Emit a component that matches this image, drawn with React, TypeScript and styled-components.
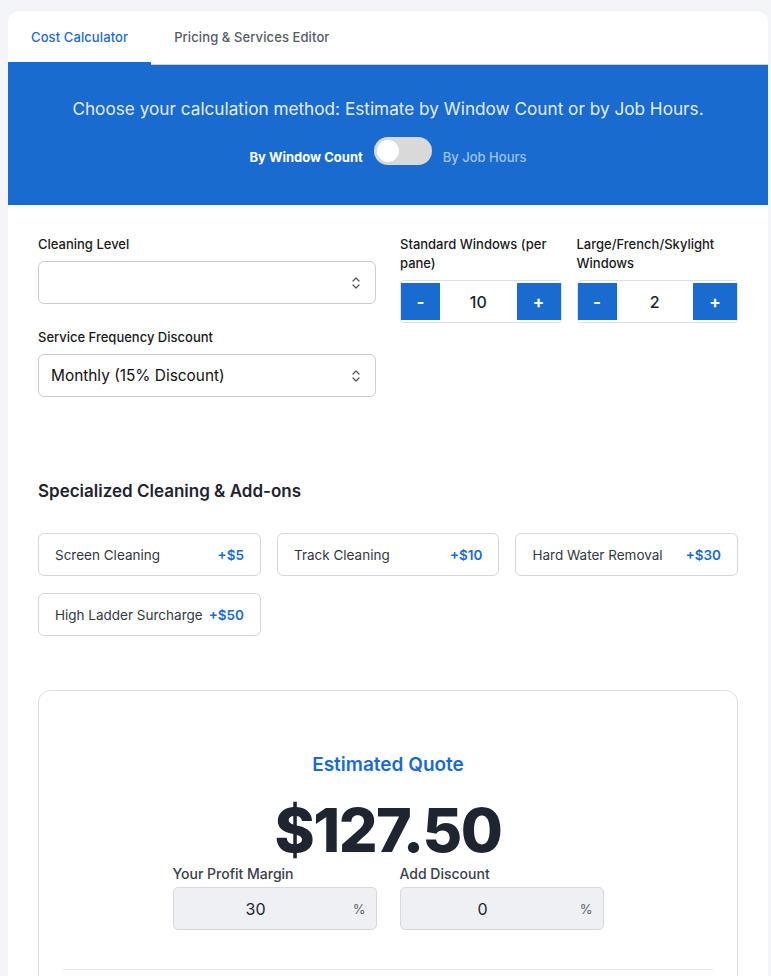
import React from 'react'
import styled, { createGlobalStyle } from 'styled-components'

const BLUE = '#1a6bcf'

const GlobalStyle = createGlobalStyle`
  * { box-sizing: border-box; }
  body {
    margin: 0;
    padding: 11px 0 0 8px;
    background: #f4f5f9;
    font-family: Inter, "Noto Sans", "Liberation Sans", sans-serif;
    color: #1f2430;
  }
`

const Card = styled.div`
  width: 760px;
  background: #ffffff;
  border-radius: 12px 12px 0 0;
  overflow: hidden;
`

const TabBar = styled.div`
  display: flex;
  border-bottom: 1px solid #c9d5e8;
`

const Tab = styled.div<{ active?: boolean }>`
  height: 54px;
  margin-bottom: -1px;
  padding: 0 23px;
  display: flex;
  align-items: center;
  font-size: 13px;
  font-weight: 500;
  letter-spacing: 0.1px;
  color: ${({ active }) => (active ? BLUE : '#555b66')};
  border-bottom: 3px solid ${({ active }) => (active ? BLUE : 'transparent')};
`

const Banner = styled.div`
  background: ${BLUE};
  padding: 32px 20px 40px;
  display: flex;
  flex-direction: column;
  align-items: center;
  gap: 16px;
`

const BannerText = styled.div`
  font-size: 17.2px;
  line-height: 24px;
  color: rgba(255, 255, 255, 0.9);
`

const ToggleRow = styled.div`
  display: flex;
  align-items: center;
  gap: 11px;
  font-size: 13px;
`

const ToggleLabel = styled.span<{ active?: boolean }>`
  padding-top: 11px;
  color: ${({ active }) => (active ? '#ffffff' : '#a3c0ea')};
  font-weight: ${({ active }) => (active ? 700 : 500)};
`

const Switch = styled.div`
  width: 58px;
  height: 28px;
  border-radius: 14px;
  background: #d9d9d9;
  padding: 3px;
  display: flex;
  align-items: center;
`

const Knob = styled.div`
  width: 22px;
  height: 22px;
  border-radius: 50%;
  background: #ffffff;
`

const Content = styled.div`
  padding: 30px 30px 0;
`

const FormGrid = styled.div`
  display: grid;
  grid-template-columns: 1fr 1fr;
  column-gap: 24px;
  align-items: start;
`

const FieldStack = styled.div`
  display: flex;
  flex-direction: column;
  gap: 24px;
`

const CounterGrid = styled.div`
  display: grid;
  grid-template-columns: 1fr 1fr;
  column-gap: 15px;
`

const Field = styled.div`
  display: flex;
  flex-direction: column;
`

const Label = styled.label`
  font-size: 13px;
  line-height: 19px;
  font-weight: 500;
  color: #1a1a1a;
  margin-bottom: 7px;
`

const Select = styled.div`
  height: 43px;
  border: 1px solid #c9ccd2;
  border-radius: 6px;
  padding: 0 14px 0 12px;
  display: flex;
  align-items: center;
  justify-content: space-between;
  font-size: 15.4px;
  color: #111;
`

const Stepper = styled.div`
  height: 43px;
  border: 1px solid #dcdfe5;
  border-radius: 4px;
  padding: 2px 0;
  display: flex;
  align-items: stretch;
`

const StepButton = styled.button<{ wide?: boolean }>`
  all: unset;
  width: ${({ wide }) => (wide ? '44px' : '39px')};
  background: ${BLUE};
  color: #fff;
  font-size: 17px;
  font-weight: 700;
  display: flex;
  align-items: center;
  justify-content: center;
  font-family: Inter, sans-serif;
`

const StepValue = styled.div`
  flex: 1;
  display: flex;
  align-items: center;
  justify-content: center;
  font-size: 16px;
  font-weight: 500;
  color: #1f2430;
`

const SectionTitle = styled.h2`
  margin: 82px 0 30px;
  font-size: 17px;
  line-height: 24px;
  font-weight: 600;
  color: #1f2430;
`

const AddonGrid = styled.div`
  display: grid;
  grid-template-columns: repeat(3, 1fr);
  column-gap: 16px;
  row-gap: 17px;
`

const Addon = styled.div`
  height: 43px;
  border: 1px solid #d3d6dc;
  border-radius: 6px;
  padding: 0 16px;
  display: flex;
  align-items: center;
  justify-content: space-between;
  gap: 6px;
  font-size: 13.5px;
  white-space: nowrap;
  color: #333842;
`

const Price = styled.span`
  color: ${BLUE};
  font-weight: 600;
  font-size: 13.5px;
`

const QuoteCard = styled.div`
  margin-top: 54px;
  border: 1px solid #dcdfe4;
  border-radius: 12px;
  padding: 60px 24px 0;
  display: flex;
  flex-direction: column;
  align-items: center;
  height: 320px;
`

const QuoteTitle = styled.div`
  font-size: 19px;
  line-height: 28px;
  font-weight: 600;
  color: ${BLUE};
`

const QuoteAmount = styled.div`
  margin-top: 19px;
  font-size: 61px;
  line-height: 64px;
  font-weight: 800;
  letter-spacing: -1.5px;
  color: #1e2530;
`

const AdjustRow = styled.div`
  margin-top: 2px;
  display: flex;
  gap: 23px;
`

const AdjustField = styled.div`
  width: 204px;
  display: flex;
  flex-direction: column;
`

const AdjustLabel = styled.div`
  font-size: 14px;
  line-height: 20px;
  font-weight: 500;
  color: #3a404b;
  margin-bottom: 3px;
`

const AdjustInput = styled.div`
  position: relative;
  height: 43px;
  background: #eff0f4;
  border: 1px solid #d6d9df;
  border-radius: 5px;
  padding: 0 50px 0 12px;
  display: flex;
  align-items: center;
  justify-content: center;
  font-size: 16px;
  color: #1f2430;
`

const Suffix = styled.span`
  position: absolute;
  right: 10px;
  font-size: 13px;
  color: #5b616c;
`

const Divider = styled.hr`
  align-self: stretch;
  margin: 39px 0 0;
  border: none;
  border-top: 1px solid #e3e5e9;
`

function UpDown() {
  return (
    <svg width="10" height="14" viewBox="0 0 10 14" fill="none" stroke="#555" strokeWidth="1.3" strokeLinecap="round" strokeLinejoin="round">
      <path d="M2 5 L5 2 L8 5" />
      <path d="M2 9 L5 12 L8 9" />
    </svg>
  )
}

function Counter({ label, value }: { label: string; value: number }) {
  return (
    <Field>
      <Label>{label}</Label>
      <Stepper>
        <StepButton>-</StepButton>
        <StepValue>{value}</StepValue>
        <StepButton wide>+</StepButton>
      </Stepper>
    </Field>
  )
}

const addons = [
  { name: 'Screen Cleaning', price: 5 },
  { name: 'Track Cleaning', price: 10 },
  { name: 'Hard Water Removal', price: 30 },
  { name: 'High Ladder Surcharge', price: 50 },
]

export default function App() {
  return (
    <>
      <GlobalStyle />
      <Card>
        <TabBar>
          <Tab active>Cost Calculator</Tab>
          <Tab>Pricing &amp; Services Editor</Tab>
        </TabBar>

        <Banner>
          <BannerText>Choose your calculation method: Estimate by Window Count or by Job Hours.</BannerText>
          <ToggleRow>
            <ToggleLabel active>By Window Count</ToggleLabel>
            <Switch>
              <Knob />
            </Switch>
            <ToggleLabel>By Job Hours</ToggleLabel>
          </ToggleRow>
        </Banner>

        <Content>
          <FormGrid>
            <FieldStack>
              <Field>
                <Label>Cleaning Level</Label>
                <Select>
                  <span />
                  <UpDown />
                </Select>
              </Field>
              <Field>
                <Label>Service Frequency Discount</Label>
                <Select>
                  <span>Monthly (15% Discount)</span>
                  <UpDown />
                </Select>
              </Field>
            </FieldStack>
            <CounterGrid>
              <Counter label="Standard Windows (per pane)" value={10} />
              <Counter label="Large/French/Skylight Windows" value={2} />
            </CounterGrid>
          </FormGrid>

          <SectionTitle>Specialized Cleaning &amp; Add-ons</SectionTitle>
          <AddonGrid>
            {addons.map((a) => (
              <Addon key={a.name}>
                <span>{a.name}</span>
                <Price>+${a.price}</Price>
              </Addon>
            ))}
          </AddonGrid>

          <QuoteCard>
            <QuoteTitle>Estimated Quote</QuoteTitle>
            <QuoteAmount>$127.50</QuoteAmount>
            <AdjustRow>
              <AdjustField>
                <AdjustLabel>Your Profit Margin</AdjustLabel>
                <AdjustInput>
                  30
                  <Suffix>%</Suffix>
                </AdjustInput>
              </AdjustField>
              <AdjustField>
                <AdjustLabel>Add Discount</AdjustLabel>
                <AdjustInput>
                  0
                  <Suffix>%</Suffix>
                </AdjustInput>
              </AdjustField>
            </AdjustRow>
            <Divider />
          </QuoteCard>
        </Content>
      </Card>
    </>
  )
}
